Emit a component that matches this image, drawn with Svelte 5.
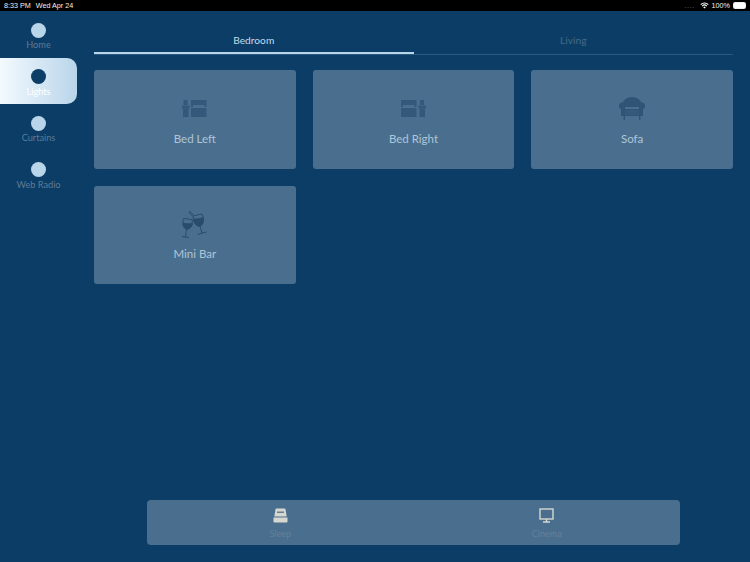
<script>
  const navItems = [
    { label: 'Home' },
    { label: 'Lights', active: true },
    { label: 'Curtains' },
    { label: 'Web Radio' }
  ]
  const cards = [
    { label: 'Bed Left', icon: 'bedLeft' },
    { label: 'Bed Right', icon: 'bedRight' },
    { label: 'Sofa', icon: 'sofa' },
    { label: 'Mini Bar', icon: 'glasses' }
  ]
</script>

<div class="page">
  <header class="status">
    <span class="time">8:33 PM</span>
    <span class="date">Wed Apr 24</span>
    <span class="status-right">
      <span class="dots">....</span>
      <svg class="wifi" viewBox="0 0 12 9" width="9" height="7">
        <path d="M6 8.6 L4.3 6.7 a2.5 2.5 0 0 1 3.4 0Z M3.4 5.8 L2.4 4.7 a5.2 5.2 0 0 1 7.2 0 L8.6 5.8 a3.8 3.8 0 0 0-5.2 0Z M1.5 3.8 L.4 2.7 a8 8 0 0 1 11.2 0 L10.5 3.8 a6.5 6.5 0 0 0-9 0Z" fill="#fff"/>
      </svg>
      <span>100%</span>
      <span class="battery"><i></i></span>
    </span>
  </header>

  <div class="body">
    <nav class="side">
      {#each navItems as item}
        <div class="nav-item" class:active={item.active}>
          <span class="dot"></span>
          <span class="nav-label">{item.label}</span>
        </div>
      {/each}
    </nav>

    <main class="main">
      <div class="tabs">
        <div class="tab selected">Bedroom</div>
        <div class="tab">Living</div>
      </div>

      <div class="grid">
        {#each cards as card}
          <div class="card">
            <div class="card-icon">
              {#if card.icon === 'bedLeft'}
                <svg viewBox="0 0 25 17" width="25" height="17" fill="#33587a">
                  <rect x="1.500" y="0" width="4" height="5"/>
                  <rect x="0" y="5.500" width="7.500" height="3"/>
                  <rect x="1" y="8.500" width="5.500" height="8.500"/>
                  <path d="M9 0h15.500v7h-2v-2h-11.500v2h-2z"/>
                  <rect x="9" y="8" width="15.500" height="9"/>
                </svg>
              {:else if card.icon === 'bedRight'}
                <svg viewBox="0 0 25 17" width="25" height="17" fill="#33587a">
                  <path d="M0 0h15.500v7h-2v-2h-11.500v2h-2z"/>
                  <rect x="0" y="8" width="15.500" height="9"/>
                  <rect x="19" y="0" width="4" height="5"/>
                  <rect x="17.500" y="5.500" width="7.500" height="3"/>
                  <rect x="18.500" y="8.500" width="5.500" height="8.500"/>
                </svg>
              {:else if card.icon === 'sofa'}
                <svg viewBox="0 0 26 23" width="26" height="23" fill="#2f5475">
                  <path d="M3.500 8C3.500 3 8 0 13 0s9.500 3 9.500 8v2h-19z"/>
                  <path d="M0 9.500a3 3 0 0 1 6 -1.500V12h14V8a3 3 0 0 1 6 1.500c0 1.500-1 2.500-2 3V19H2v-6.500c-1-.5-2-1.500-2-3z"/>
                  <rect x="6" y="13" width="14" height="5" fill="#36597a"/>
                  <rect x="4.500" y="19" width="1.500" height="4"/>
                  <rect x="20" y="19" width="1.500" height="4"/>
                </svg>
              {:else}
                <svg viewBox="0 0 25 27" width="25" height="27" fill="none" stroke="#2a4c6c" stroke-width="1">
                  <path d="M1.500 7.500 L10 8.500 C11 13 9 18 5 18 C1 18 0 12 1.500 7.500z"/>
                  <path d="M1 12c3 1 6 1 9.500 .5 C10 15.500 8 18 5 18 C2.500 18 1.200 15 1 12z" fill="#2a4c6c"/>
                  <path d="M4.500 18 L3.500 26 M0 25.500 L7 26.500"/>
                  <path d="M11 5 L20 3 C22.500 8 21.500 14 18 15 C14 16 11 11 11 5z"/>
                  <path d="M11.300 8c3 .4 6.500-.3 10-1.500 .3 3.500-.8 7.500-3.300 8.500-3 .8-5.800-3-6.700-7z" fill="#2a4c6c"/>
                  <path d="M18 15 L20 22.500 M15.500 23.500 L24.500 21"/>
                  <circle cx="8" cy="1.500" r=".8"/>
                  <circle cx="10" cy="3.500" r=".8"/>
                </svg>
              {/if}
            </div>
            <div class="card-label">{card.label}</div>
          </div>
        {/each}
      </div>

      <div class="scenes">
        <div class="scene">
          <svg viewBox="0 0 15 15" width="15" height="15" fill="#d5d7d0">
            <path d="M3.500 0.500h8a1 1 0 0 1 1 .8l1.200 7.200h-12.400l1.200-7.200a1 1 0 0 1 1-.8z"/>
            <rect x="4" y="3.500" width="7" height="1.500" fill="#6d7f8b"/>
            <path d="M.5 9.500h14v4a1 1 0 0 1-1 1h-12a1 1 0 0 1-1-1z"/>
          </svg>
          <span>Sleep</span>
        </div>
        <div class="scene">
          <svg viewBox="0 0 15 15" width="15" height="15" fill="none" stroke="#d5d7d0">
            <rect x="1" y="1" width="13" height="10" stroke-width="1.400"/>
            <path d="M7.500 11v2.500M4 14h7" stroke-width="1.400"/>
          </svg>
          <span>Cinema</span>
        </div>
      </div>
    </main>
  </div>
</div>

<style>
  :global(body) {
    margin: 0;
    background: #0b3d66;
  }
  .page {
    width: 750px;
    height: 562px;
    display: flex;
    flex-direction: column;
    overflow: hidden;
    background: #0b3d66;
    font-family: Lato, "Open Sans", sans-serif;
  }
  .status {
    height: 11px;
    flex: none;
    background: #000;
    color: #f2f2f2;
    display: flex;
    align-items: center;
    padding: 0 4px;
    font: 7.200px/11px "Liberation Sans", sans-serif;
  }
  .date {
    margin-left: 5px;
  }
  .status-right {
    margin-left: auto;
    display: flex;
    align-items: center;
    gap: 3px;
  }
  .dots {
    color: #777;
    letter-spacing: .5px;
    margin-right: 2px;
  }
  .battery {
    width: 11px;
    height: 5px;
    border: 1px solid #eee;
    border-radius: 1.500px;
    display: block;
    margin-right: 0;
  }
  .battery i {
    display: block;
    height: 100%;
    background: #fff;
  }
  .body {
    flex: 1;
    display: flex;
    min-height: 0;
  }
  .side {
    width: 77px;
    flex: none;
  }
  .nav-item {
    height: 46.500px;
    display: flex;
    flex-direction: column;
    align-items: center;
    padding-top: 11.500px;
    box-sizing: border-box;
    color: #5d7b97;
    font-size: 9.200px;
    line-height: 12px;
  }
  .nav-item.active {
    background: linear-gradient(90deg, #f3faff, #b9d5ea);
    border-radius: 0 10px 10px 0;
    color: #fff;
  }
  .dot {
    width: 15px;
    height: 15px;
    border-radius: 50%;
    background: #b9d5ea;
    margin-bottom: 1.500px;
  }
  .active .dot {
    background: #0b3d66;
  }
  .main {
    flex: 1;
    padding: 0 17px 17px;
    display: flex;
    flex-direction: column;
  }
  .tabs {
    display: flex;
    height: 43px;
    flex: none;
    border-bottom: 1px solid #2a5a80;
  }
  .tab {
    flex: 1;
    text-align: center;
    padding-top: 23px;
    font-size: 10.200px;
    line-height: 13px;
    color: #466a88;
    box-sizing: border-box;
  }
  .tab.selected {
    color: #c5dbea;
    border-bottom: 2px solid #b9d5ea;
    height: 43px;
  }
  .grid {
    margin-top: 15px;
    display: grid;
    grid-template-columns: repeat(3, 1fr);
    grid-auto-rows: 98.500px;
    gap: 17px;
  }
  .card {
    background: #4a6f8e;
    border-radius: 3px;
    display: flex;
    flex-direction: column;
    align-items: center;
  }
  .card-icon {
    height: 61.700px;
    padding-top: 16px;
    display: flex;
    align-items: center;
    justify-content: center;
    box-sizing: border-box;
  }
  .card-label {
    color: #aec6d8;
    font-size: 11.500px;
    line-height: 14px;
  }
  .scenes {
    margin: auto auto 0;
    width: 533px;
    height: 45px;
    display: flex;
    background: #4a6f8e;
    border-radius: 4px;
  }
  .scene {
    flex: 1;
    display: flex;
    flex-direction: column;
    align-items: center;
    padding-top: 8px;
    color: #648099;
    font-size: 9px;
    line-height: 11px;
  }
  .scene svg {
    margin-bottom: 5px;
  }
</style>
